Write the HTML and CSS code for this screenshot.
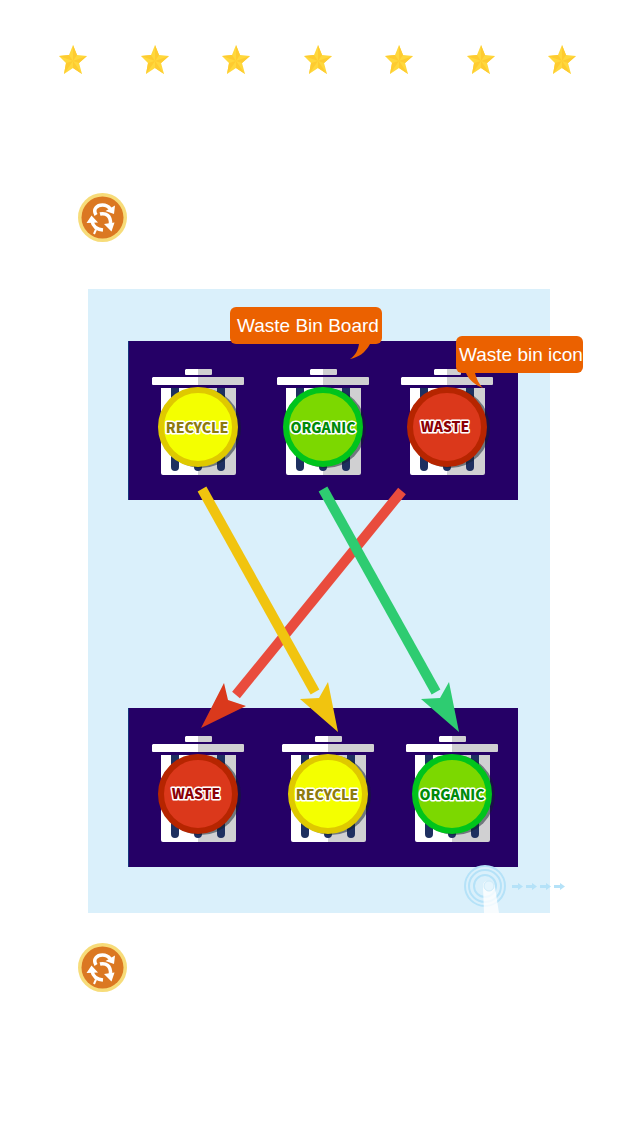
FILE: index.html
```html
<!DOCTYPE html>
<html lang="en">
<head>
<meta charset="utf-8">
<title>Waste Bin Board</title>
<link rel="stylesheet" href="styles.css">
</head>
<body>
<svg class="defs" aria-hidden="true">
  <symbol id="star" viewBox="0 0 28 29">
    <path fill="#ffd83c" d="M14 0l4 10 10 1-8 7 3 11-9-6-9 6 2-11-7-7 10-1z"/>
    <path fill="#fecb30" d="M14 0l4 10-4 6zM28 11l-8 7-6-2zM23 29l-9-6V16zM5 29l2-11 7-2zM0 11l10-1 4 6z"/>
  </symbol>
  <symbol id="coin" viewBox="0 0 49 49">
    <circle cx="24.5" cy="24.5" r="24.5" fill="#f7dc79"/>
    <circle cx="24.5" cy="24.5" r="21" fill="#db7822"/>
    <g fill="none" stroke="#fff" stroke-width="3.500">
      <path d="M18 22C14.500 16 19 12 24.500 12C28 12 30.500 13.500 32.500 16"/>
      <path d="M22 21C28 19.500 33 23 32.500 31"/>
      <path d="M14 28C15 33.500 19 36.500 25 37"/>
      <path stroke-width="2" d="M18 36.500L16 41"/>
    </g>
    <path fill="#fff" d="M37 12.500L36 21L27.500 18ZM36.500 29.500L33.500 38.500L26 31ZM8.500 30L13.500 22.500L20 29.500Z"/>
  </symbol>
  <symbol id="bin" viewBox="0 0 96 108">
    <path fill="#fff" d="M34 1h12v6H34a1 1 0 0 1-1-1V2zM1 9h45v8H1a1 1 0 0 1-1-1v-6zM9 20h37v87H11a2 2 0 0 1-2-2z"/>
    <path fill="#d0d0d2" d="M46 1h13a1 1 0 0 1 1 1v4a1 1 0 0 1-1 1H46zM46 9h45a1 1 0 0 1 1 1v6a1 1 0 0 1-1 1H46zM46 20h38v85a2 2 0 0 1-2 2H46z"/>
    <path fill="#1e3060" d="M19 20h8v79a4 4 0 0 1-8 0zM42 20h8v79a4 4 0 0 1-8 0zM65 20h8v79a4 4 0 0 1-8 0z"/>
    <circle cx="49" cy="60" r="40" fill="#10202a" opacity=".5"/>
  </symbol>
</svg>
<main class="page">
  <div class="stars">
    <svg class="star"><use href="#star"/></svg>
    <svg class="star"><use href="#star"/></svg>
    <svg class="star"><use href="#star"/></svg>
    <svg class="star"><use href="#star"/></svg>
    <svg class="star"><use href="#star"/></svg>
    <svg class="star"><use href="#star"/></svg>
    <svg class="star"><use href="#star"/></svg>
  </div>
  <svg class="coin"><use href="#coin"/></svg>
  <section class="stage">
    <div class="board">
      <svg class="bin recycle" viewBox="0 0 96 108"><use href="#bin"/><circle class="badge" cx="46" cy="59" r="37"/><text class="word" x="45" y="65">RECYCLE</text></svg>
      <svg class="bin organic" viewBox="0 0 96 108"><use href="#bin"/><circle class="badge" cx="46" cy="59" r="37"/><text class="word" x="46" y="65">ORGANIC</text></svg>
      <svg class="bin waste" viewBox="0 0 96 108"><use href="#bin"/><circle class="badge" cx="46" cy="59" r="37"/><text class="word" x="44" y="64">WASTE</text></svg>
    </div>
    <div class="board board-target">
      <svg class="bin waste" viewBox="0 0 96 108"><use href="#bin"/><circle class="badge" cx="46" cy="59" r="37"/><text class="word" x="44" y="64">WASTE</text></svg>
      <svg class="bin recycle" viewBox="0 0 96 108"><use href="#bin"/><circle class="badge" cx="46" cy="59" r="37"/><text class="word" x="45" y="65">RECYCLE</text></svg>
      <svg class="bin organic" viewBox="0 0 96 108"><use href="#bin"/><circle class="badge" cx="46" cy="59" r="37"/><text class="word" x="46" y="65">ORGANIC</text></svg>
    </div>
    <svg class="arrows" viewBox="0 0 462 624" aria-hidden="true">
      <path stroke="#e94c3d" d="M314 202L148 406"/>
      <path fill="#da391c" d="M113 439L136 394L140 411L158 417Z"/>
      <path stroke="#f1c40f" d="M114 200L227 403"/>
      <path fill="#f1c40f" d="M250 443L212 410L231 409L240 393Z"/>
      <path stroke="#2ecc71" d="M235 200L348 403"/>
      <path fill="#2ecc71" d="M371 443L333 410L352 409L361 393Z"/>
    </svg>
    <div class="tip tip-board">Waste Bin Board
      <svg class="tail" viewBox="0 0 20 15"><path d="M9 0H20C15 9 9 13 0 15C6 11 8 6 9 0Z"/></svg>
    </div>
    <div class="tip tip-bin">Waste bin icon
      <svg class="tail" viewBox="0 0 20 15"><path d="M0 0H9C11 7 13 11 17 15C9 12 3 7 0 0Z"/></svg>
    </div>
    <svg class="drag" viewBox="0 0 102 48" aria-hidden="true">
      <g fill="none" stroke="#b5e2f8" stroke-width="2">
        <circle cx="21" cy="21" r="20"/><circle cx="21" cy="21" r="16"/><circle cx="21" cy="21" r="11"/>
      </g>
      <path fill="#fff" opacity=".8" d="M19 22C18 14 30 14 31 22L35 48H20Z"/>
      <circle cx="25" cy="21" r="5" fill="#e5f5fd" stroke="#cdebf9"/>
      <path fill="#b5e2f8" d="M48 20h6v-2l5 3.500-5 3.500v-2h-6zM62 20h6v-2l5 3.500-5 3.500v-2h-6zM76 20h6v-2l5 3.500-5 3.500v-2h-6zM90 20h6v-2l5 3.500-5 3.500v-2h-6z"/>
    </svg>
  </section>
  <svg class="coin"><use href="#coin"/></svg>
</main>
</body>
</html>
```
FILE: styles.css
```css
* { box-sizing: border-box; }
body { margin: 0; background: #fff; font-family: "Liberation Sans", Arial, sans-serif; }
.defs { display: none; }
.page {
  display: flex;
  flex-direction: column;
  min-height: 100vh;
  padding: 45px 64px 143px 59px;
}
.stars { display: flex; justify-content: space-between; margin-bottom: 119px; }
.star { width: 28px; height: 29px; }
.coin { width: 49px; height: 49px; margin-left: 19px; }
.stage {
  position: relative;
  display: flex;
  flex-direction: column;
  gap: 208px;
  width: 100%;
  max-width: 462px;
  margin: 47px 0 30px 29px;
  padding: 52px 32px 46px 40px;
  background: #daf0fb;
}
.board {
  display: flex;
  justify-content: space-between;
  padding: 27px 21px 24px 23px;
  background: #250066;
  border-left: 1px solid #16357c;
}
.board-target { display: grid; grid-template-columns: 130px 124px 96px; justify-content: start; padding-right: 0; }
.bin { width: 96px; height: 108px; }
.badge { stroke-width: 6px; }
.recycle .badge { fill: #f4ff00; stroke: #dfc900; }
.organic .badge { fill: #7cd800; stroke: #00c41c; }
.waste .badge { fill: #db381b; stroke: #b62500; }
.word {
  font: 900 14px "Noto Sans CJK JP", "Liberation Sans", Arial, sans-serif;
  text-anchor: middle;
  stroke: #fff;
  stroke-width: 3px;
  stroke-linejoin: round;
  paint-order: stroke;
}
.recycle .word { fill: #8d7b0c; }
.organic .word { fill: #008a08; }
.waste .word { fill: #8b0005; }
.arrows { position: absolute; inset: 0; width: 100%; height: 100%; fill: none; stroke-width: 10px; }
.tip {
  position: absolute;
  border-radius: 6px;
  background: #eb6100;
  color: #fff;
  font-size: 19px;
  line-height: 37px;
  white-space: nowrap;
}
.tip-board { left: 142px; top: 18px; padding: 0 3px 0 7px; }
.tip-bin { left: 368px; top: 47px; padding: 0 0 0 3px; }
.tail { position: absolute; top: 100%; width: 20px; height: 15px; fill: #eb6100; }
.tip-board .tail { right: 12px; }
.tip-bin .tail { left: 10px; }
.drag { position: absolute; left: 376px; bottom: 0; width: 102px; height: 48px; }
```
